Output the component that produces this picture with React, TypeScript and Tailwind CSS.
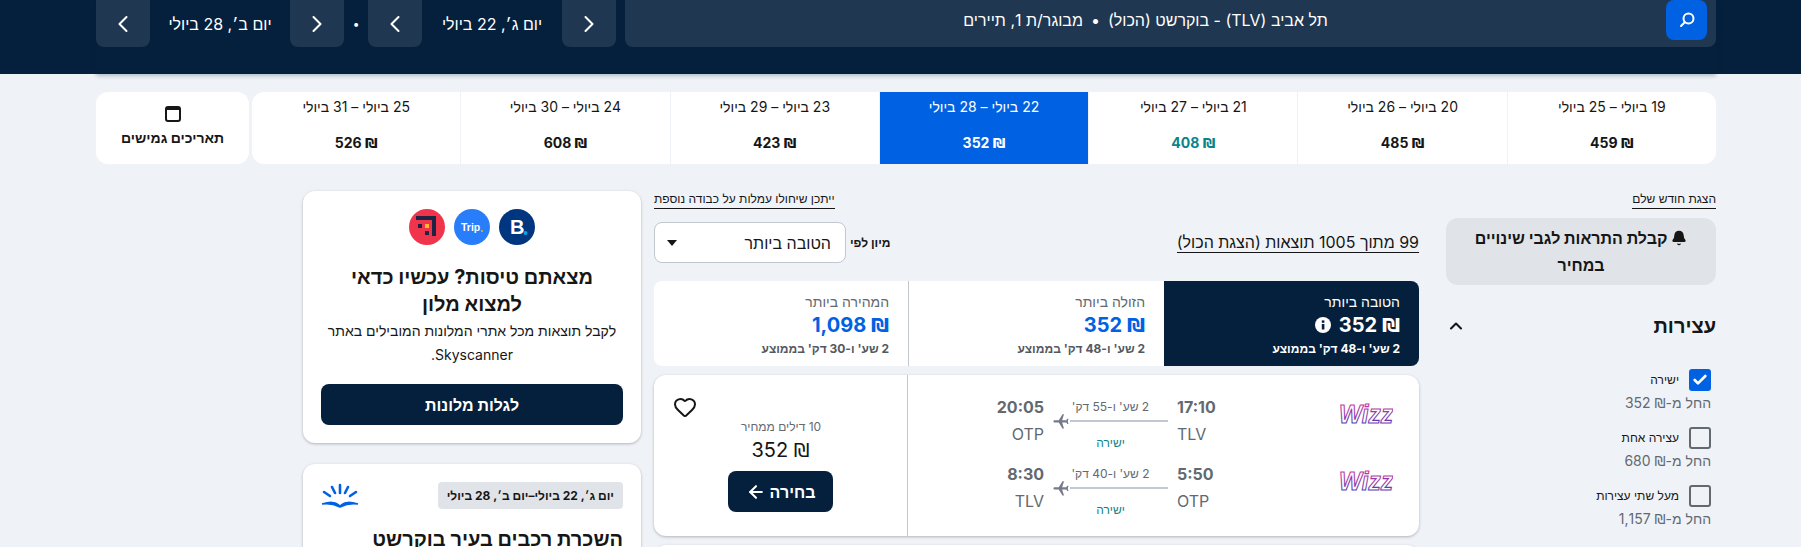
import React from 'react';
import { ArrowLeft, Bell, Check, ChevronLeft, ChevronRight, ChevronUp, Heart } from 'lucide-react';

const dateOptions = [
  { label: '19 ביולי – 25 ביולי', price: '459' },
  { label: '20 ביולי – 26 ביולי', price: '485' },
  { label: '21 ביולי – 27 ביולי', price: '408', cheap: true },
  { label: '22 ביולי – 28 ביולי', price: '352', active: true },
  { label: '23 ביולי – 29 ביולי', price: '423' },
  { label: '24 ביולי – 30 ביולי', price: '608' },
  { label: '25 ביולי – 31 ביולי', price: '526' },
];

const stops = [
  { label: 'ישירה', from: '352', checked: true },
  { label: 'עצירה אחת', from: '680' },
  { label: 'מעל שתי עצירות', from: '1,157' },
];

const legs = [
  { dep: '17:10', from: 'TLV', arr: '20:05', to: 'OTP', duration: "2 שע' ו-55 דק'", id: 'a' },
  { dep: '5:50', from: 'OTP', arr: '8:30', to: 'TLV', duration: "2 שע' ו-40 דק'", id: 'b' },
];

// the shekel sign sits in another font, Inter's one is too small
const Price = ({ value }: { value: string }) => (
  <span>
    <span className="font-['DejaVu_Sans',sans-serif]">₪</span> {value}
  </span>
);

const DateStepper = ({ label }: { label: string }) => (
  <div className="flex w-[248px] items-center">
    <button className="flex h-[47px] w-[54px] items-center justify-center rounded-b-lg bg-[#1f3751] text-white">
      <ChevronRight className="h-7 w-7" strokeWidth={1.75} />
    </button>
    <div className="flex-1 text-center text-base text-white">{label}</div>
    <button className="flex h-[47px] w-[54px] items-center justify-center rounded-b-lg bg-[#1f3751] text-white">
      <ChevronLeft className="h-7 w-7" strokeWidth={1.75} />
    </button>
  </div>
);

const WizzLogo = ({ id }: { id: string }) => (
  <svg width="54" height="26" viewBox="0 0 54 26">
    <defs>
      <linearGradient id={`wizz-${id}`} x1="0" y1="0" x2="0" y2="1">
        <stop offset="0" stopColor="#e0359b" />
        <stop offset="1" stopColor="#3b3bb5" />
      </linearGradient>
    </defs>
    <text
      x="0"
      y="21"
      direction="ltr"
      fontFamily="Liberation Sans"
      fontSize="26"
      fontStyle="italic"
      fontWeight="700"
      fill="#fff"
      stroke={`url(#wizz-${id})`}
      strokeWidth="1.1"
      textLength="54"
      lengthAdjust="spacingAndGlyphs"
    >
      Wizz
    </text>
  </svg>
);

const PlaneLeft = () => (
  <svg width="18" height="18" viewBox="0 0 24 24" className="-rotate-90 fill-[#767a8a]">
    <path d="M21 16v-2l-8-5V3.5c0-.83-.67-1.5-1.5-1.5S10 2.67 10 3.5V9l-8 5v2l8-2.5V19l-2 1.5V22l3.5-1 3.5 1v-1.5L13 19v-5.5l8 2.5z" />
  </svg>
);

const App = () => {
  return (
    <div dir="rtl" className="h-[547px] w-[1801px] overflow-hidden bg-[#eff3f8] font-['Inter','Liberation_Sans',sans-serif] text-[#161616]">
      {/* Search summary */}
      <div className="h-[74px] bg-[#05203c] pl-[96px] pr-[85px]">
        <div className="flex h-[74px] items-start gap-[9px] shadow-[0_2px_4px_rgba(5,32,60,0.25)]">
          <div className="flex h-[47px] flex-1 items-start rounded-b-lg bg-[#1f3751] pr-[9px]">
            <button className="flex h-10 w-[41px] items-center justify-center rounded-lg bg-[#0062e3]">
              <svg width="18" height="18" viewBox="0 0 18 18" fill="none" stroke="white" strokeWidth="2" strokeLinecap="round">
                <circle cx="10.5" cy="7.5" r="5" />
                <path d="M6.8 11.2 3 15" />
              </svg>
            </button>
            <div className="flex h-10 flex-1 items-center justify-center gap-2 text-base text-white">
              <span>תל אביב (TLV) - בוקרשט (הכול)</span>
              <span>•</span>
              <span>מבוגר/ת 1, תיירים</span>
            </div>
          </div>
          <div className="flex h-[47px] items-center">
            <DateStepper label="יום ג׳, 22 ביולי" />
            <span className="w-6 text-center text-xs text-white">•</span>
            <DateStepper label="יום ב׳, 28 ביולי" />
          </div>
        </div>
      </div>

      {/* Date options */}
      <div className="mt-[18px] flex gap-[3px] pl-[96px] pr-[85px]">
        <div className="flex h-[72px] flex-1 overflow-hidden rounded-xl bg-white">
          {dateOptions.map((d) => (
            <div
              key={d.label}
              className={`flex flex-1 flex-col items-center border-l border-[#eff3f8] pt-[6px] last:border-l-0 ${d.active ? 'bg-[#0062e3] text-white' : ''}`}
            >
              <div className="h-[18px] text-sm leading-[18px]">{d.label}</div>
              <div className={`mt-[17px] text-sm font-bold ${d.cheap ? 'text-[#0c838a]' : ''}`}>
                <Price value={d.price} />
              </div>
            </div>
          ))}
        </div>
        <div className="flex h-[72px] w-[153px] flex-col items-center rounded-xl bg-white pt-[14px]">
          <div className="h-4 w-[16px] rounded-[3px] border-[2px] border-t-[4px] border-[#161616]" />
          <div className="mt-[6px] text-sm font-bold">תאריכים גמישים</div>
        </div>
      </div>

      <div className="mt-[27px] flex items-start pl-[96px] pr-[85px]">
        {/* Filters */}
        <aside className="w-[270px] shrink-0">
          <div className="flex h-[27px] items-start">
            <span className="border-b border-[#161616] pb-[2px] text-xs leading-[15px]">הצגת חודש שלם</span>
          </div>
          <button className="flex h-[67px] w-full flex-col items-center justify-center rounded-xl bg-[#e0e4e9] text-base font-bold leading-[27px]">
            <span className="flex items-center gap-1">
              <Bell className="h-4 w-4 fill-current" />
              קבלת התראות לגבי שינויים
            </span>
            <span>במחיר</span>
          </button>
          <div className="mt-[27px] flex items-center justify-between">
            <h2 className="text-xl font-bold leading-7">עצירות</h2>
            <ChevronUp className="h-5 w-5" strokeWidth={2.5} />
          </div>
          <div className="mt-[28px] pr-[5px]">
            {stops.map((s) => (
              <div key={s.label} className="mb-[14px] h-[44px]">
                <div className="flex h-[23px] items-center gap-[10px]">
                  {s.checked ? (
                    <span className="flex h-[22px] w-[22px] items-center justify-center rounded-[3px] bg-[#0062e3] text-white">
                      <Check className="h-4 w-4" strokeWidth={4} />
                    </span>
                  ) : (
                    <span className="h-[22px] w-[22px] rounded-[3px] border-[2px] border-[#626971]" />
                  )}
                  <span className="text-xs">{s.label}</span>
                </div>
                <div className="mt-[2px] text-sm leading-5 text-[#626971]">
                  החל מ-<Price value={s.from} />
                </div>
              </div>
            ))}
          </div>
        </aside>

        {/* Results */}
        <main className="mr-[27px] w-[765px] shrink-0">
          <div className="flex h-[31px] justify-end">
            <span className="h-[18px] border-b border-[#161616] pb-[2px] text-xs leading-[15px]">ייתכן שיחולו עמלות על כבודה נוספת</span>
          </div>
          <div className="flex h-[41px] items-center justify-between">
            <span className="border-b border-[#161616] text-base leading-5">99 מתוך 1005 תוצאות (הצגת הכול)</span>
            <div className="flex items-center gap-[4px]">
              <span className="text-xs font-bold">מיון לפי</span>
              <div className="flex h-[41px] w-[192px] items-center justify-between rounded-lg border border-[#c1c7cf] bg-white px-[10px] text-base">
                <span className="pr-[4px]">הטובה ביותר</span>
                <span className="ml-[2px] h-0 w-0 border-x-[5px] border-t-[6px] border-x-transparent border-t-[#161616]" />
              </div>
            </div>
          </div>

          {/* Sort tabs */}
          <div className="mt-[18px] flex h-[85px] overflow-hidden rounded-lg bg-white">
            <div className="w-[255px] bg-[#05203c] pr-[19px] pt-[11px] text-white">
              <div className="text-sm leading-5">הטובה ביותר</div>
              <div className="-mt-[1px] flex h-7 items-center gap-2 text-xl font-bold">
                <Price value="352" />
                <svg width="16" height="16" viewBox="0 0 16 16">
                  <circle cx="8" cy="8" r="8" fill="white" />
                  <rect x="6.8" y="7" width="2.6" height="5.5" fill="#05203c" />
                  <rect x="6.8" y="3.4" width="2.6" height="2.4" fill="#05203c" />
                </svg>
              </div>
              <div className="text-xs font-bold leading-5">2 שע' ו-48 דק' בממוצע</div>
            </div>
            <div className="w-[255px] pr-[19px] pt-[11px]">
              <div className="text-sm leading-5 text-[#626971]">הזולה ביותר</div>
              <div className="-mt-[1px] flex h-7 items-center text-xl font-bold text-[#0062e3]">
                <Price value="352" />
              </div>
              <div className="text-xs font-bold leading-5 text-[#545860]">2 שע' ו-48 דק' בממוצע</div>
            </div>
            <div className="w-[255px] border-r border-[#c1c7cf] pr-[19px] pt-[11px]">
              <div className="text-sm leading-5 text-[#626971]">המהירה ביותר</div>
              <div className="-mt-[1px] flex h-7 items-center text-xl font-bold text-[#0062e3]">
                <Price value="1,098" />
              </div>
              <div className="text-xs font-bold leading-5 text-[#545860]">2 שע' ו-30 דק' בממוצע</div>
            </div>
          </div>

          {/* Flight card */}
          <div className="mt-[9px] flex h-[161px] overflow-hidden rounded-xl bg-white shadow-[0_1px_3px_rgba(37,32,31,0.3)]">
            <div className="flex-1 border-l border-[#c1c7cf] pr-[26px] pt-[20px]">
              {legs.map((l) => (
                <div key={l.id} className="flex h-[67px] items-start">
                  <div className="mt-[7px] w-[54px]">
                    <WizzLogo id={l.id} />
                  </div>
                  <div className="mr-[118px] w-[44px] text-left">
                    <div className="text-base font-bold leading-6 text-[#626971]">{l.dep}</div>
                    <div className="mt-[3px] text-base leading-6 text-[#626971]">{l.from}</div>
                  </div>
                  <div className="w-[133px] text-center">
                    <div className="text-xs leading-6 text-[#626971]">{l.duration}</div>
                    <div className="mt-[-7px] flex items-center gap-0 pr-[9px]">
                      <span className="h-[2px] w-[98px] bg-[#c1c7d3]" />
                      <PlaneLeft />
                    </div>
                    <div className="mt-[3px] text-xs leading-5 text-[#0c838a]">ישירה</div>
                  </div>
                  <div className="w-[60px] text-right">
                    <div className="text-base font-bold leading-6 text-[#626971]">{l.arr}</div>
                    <div className="mt-[3px] text-base leading-6 text-[#626971]">{l.to}</div>
                  </div>
                </div>
              ))}
            </div>
            <div className="relative flex w-[253px] flex-col items-center pt-[43px]">
              <Heart className="absolute left-[19px] top-[20px] h-6 w-6" strokeWidth={2} />
              <div className="pl-[1px] text-xs leading-[18px] text-[#626971]">10 דילים ממחיר</div>
              <div className="-mt-[2px] text-xl leading-8">
                <Price value="352" />
              </div>
              <button className="mt-[5px] flex h-[41px] w-[105px] items-center justify-center gap-1 rounded-lg bg-[#05203c] text-base font-bold text-white">
                בחירה
                <ArrowLeft className="h-5 w-5" strokeWidth={2.5} />
              </button>
            </div>
          </div>
          <div className="mt-[9px] h-[40px] rounded-xl bg-white shadow-[0_1px_3px_rgba(37,32,31,0.3)]" />
        </main>

        {/* Side ads */}
        <aside className="mr-[13px] w-[338px] shrink-0">
          <div className="rounded-xl bg-white px-[18px] pb-[18px] pt-[18px] shadow-[0_1px_3px_rgba(37,32,31,0.3)]">
            <div className="flex justify-center gap-[9px]">
              <svg width="36" height="36" viewBox="0 0 36 36">
                <circle cx="18" cy="18" r="18" fill="#003580" />
                <text x="11" y="25" direction="ltr" fontFamily="Liberation Sans" fontSize="20" fontWeight="700" fill="white">B</text>
                <circle cx="26.5" cy="24" r="2" fill="#00a8ee" />
              </svg>
              <svg width="36" height="36" viewBox="0 0 36 36">
                <circle cx="18" cy="18" r="18" fill="#287dfa" />
                <text x="7" y="22" direction="ltr" fontFamily="Liberation Sans" fontSize="10.5" fontWeight="700" fill="white">Trip</text>
                <circle cx="28" cy="22" r="1" fill="#ffb400" />
              </svg>
              <svg width="36" height="36" viewBox="0 0 36 36">
                <circle cx="18" cy="18" r="18" fill="#f0344b" />
                <path d="M7 7h20v20h-4V11H7z" fill="#1d2343" />
                <rect x="9" y="15" width="4" height="4" fill="#1d2343" />
                <rect x="16" y="15" width="4" height="4" fill="#fcb92c" />
                <rect x="16" y="22" width="4" height="4" fill="#1d2343" />
              </svg>
            </div>
            <h3 className="mt-[19px] text-center text-xl font-bold leading-[27px]">מצאתם טיסות? עכשיו כדאי למצוא מלון</h3>
            <p className="mt-[1px] text-center text-sm leading-6">לקבל תוצאות מכל אתרי המלונות המובילים באתר Skyscanner.</p>
            <button className="mt-[17px] h-[41px] w-full rounded-lg bg-[#05203c] text-base font-bold text-white">לגלות מלונות</button>
          </div>
          <div className="mt-[21px] h-[120px] rounded-xl bg-white px-[18px] pt-[18px] shadow-[0_1px_3px_rgba(37,32,31,0.3)]">
            <div className="flex items-center justify-between">
              <span className="flex h-[27px] items-center rounded bg-[#e0e4e9] px-[9px] text-xs font-bold">יום ג׳, 22 ביולי–יום ב׳, 28 ביולי</span>
              <svg width="38" height="26" viewBox="0 0 38 26" fill="none" stroke="#0062e3" strokeLinecap="round">
                <path d="M19 2v8M11 4l3 6M27 4l-3 6M3 9l6 4M35 9l-6 4" strokeWidth="2.6" />
                <path d="M1 21c7-2 13-3 18 2 5-5 11-4 18-2-7-1-12 0-18 3-6-3-11-4-18-3z" fill="#0062e3" strokeWidth="1.5" />
              </svg>
            </div>
            <h3 className="mt-[16px] text-xl font-bold leading-7">השכרת רכבים בעיר בוקרשט</h3>
          </div>
        </aside>
      </div>
    </div>
  );
};

export default App;
